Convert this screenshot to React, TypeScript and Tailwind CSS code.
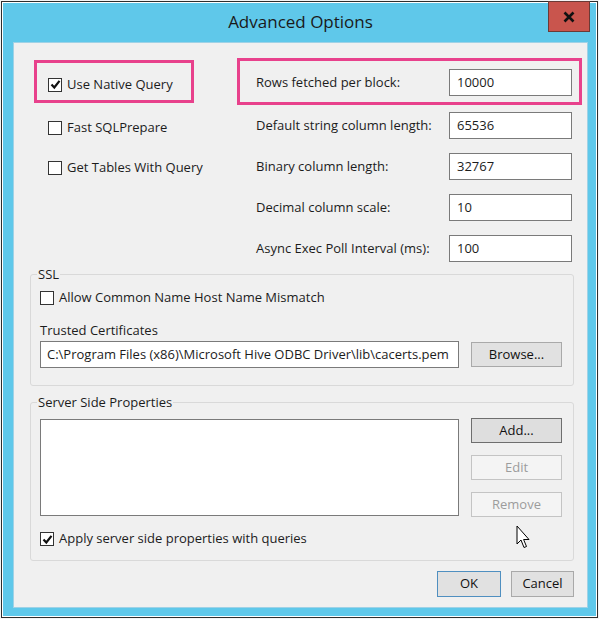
import React from "react";

function Check({ checked = false }: { checked?: boolean }) {
  return (
    <span className="flex h-[14px] w-[14px] shrink-0 items-center justify-center border border-[#333] bg-white">
      {checked && (
        <svg width="11" height="11" viewBox="0 0 11 11">
          <path d="M1.5 5.5 L4.3 8.5 L9.5 1.8" fill="none" stroke="#111" strokeWidth="2.2" />
        </svg>
      )}
    </span>
  );
}

function CheckRow({ label, checked }: { label: string; checked?: boolean }) {
  return (
    <label className="flex h-[20px] items-center gap-[5px] whitespace-nowrap">
      <Check checked={checked} />
      <span>{label}</span>
    </label>
  );
}

function Field({ label, value }: { label: string; value: string }) {
  return (
    <div className="flex h-[27px] items-center">
      <span className="w-[193px] whitespace-nowrap">{label}</span>
      <div className="flex h-[27px] w-[123px] items-center border border-[#7a7a7a] bg-white pl-[7px]">
        {value}
      </div>
    </div>
  );
}

function Btn({
  children,
  kind = "normal",
  size = "h-[25px] w-[91px]",
}: {
  children: React.ReactNode;
  kind?: "normal" | "default" | "disabled" | "ok";
  size?: string;
}) {
  const look =
    kind === "default"
      ? "border-[#6e6e6e] bg-[#dedede] text-[#111]"
      : kind === "disabled"
      ? "border-[#c4c4c4] bg-[#f4f4f4] text-[#9c9c9c]"
      : kind === "ok"
      ? "border-[#4f8fc0] bg-[#e1e1e1] text-[#111]"
      : "border-[#a9a9a9] bg-[#e1e1e1] text-[#111]";
  return (
    <button className={`flex items-center justify-center border ${size} ${look}`}>
      {children}
    </button>
  );
}

export default function App() {
  return (
    <div className="h-[619px] w-[599px] bg-[#f4f4f4] p-[1px] font-['Open_Sans',sans-serif] text-[13px] text-[#1c1c1c]">
      <div className="h-full border border-[#2e2e2e]">
        <div className="relative flex h-full flex-col border border-white bg-[#5fc8ea] pb-[8px] pl-[10px] pr-[8px]">
          {/* title bar */}
          <div className="flex h-[39px] items-center justify-center pb-[1px] text-[17px] text-[#1a1a1a]">
            Advanced Options
          </div>
          <button className="absolute right-[6px] top-[-2px] flex h-[31px] w-[42px] items-center justify-center border border-[#6b3a36] bg-[#c9554d]">
            <svg width="12" height="12" viewBox="0 0 12 12">
              <path d="M1.5 1.5 L10.5 10.5 M10.5 1.5 L1.5 10.5" stroke="#111" strokeWidth="2.6" />
            </svg>
          </button>

          {/* content */}
          <div className="flex flex-1 flex-col border border-[#9fd2e6] bg-[#f0f0f0] pb-[10px]">
            <div className="flex pl-[20px] pt-[15px]">
              <div className="flex w-[160px] flex-col">
                <div className="mt-[2px] flex h-[43px] items-center border-[3px] border-[#e8418c] pl-[11px] pt-[6px]">
                  <CheckRow label="Use Native Query" checked />
                </div>
                <div className="mt-[15px] flex flex-col gap-[20px] pl-[14px]">
                  <CheckRow label="Fast SQLPrepare" />
                  <CheckRow label="Get Tables With Query" />
                </div>
              </div>
              <div className="ml-[43px] flex w-[345px] flex-col gap-[14px]">
                <div className="-mb-[7px] flex h-[47px] border-[3px] border-[#e8418c] pl-[16px] pt-[8px]">
                  <Field label="Rows fetched per block:" value="10000" />
                </div>
                <div className="flex flex-col gap-[14px] pl-[19px]">
                  <Field label="Default string column length:" value="65536" />
                  <Field label="Binary column length:" value="32767" />
                  <Field label="Decimal column scale:" value="10" />
                  <Field label="Async Exec Poll Interval (ms):" value="100" />
                </div>
              </div>
            </div>

            {/* SSL */}
            <fieldset className="ml-[16px] mr-[13px] mt-[4px] rounded-[3px] border border-[#d9d9d9] pb-[17px] pl-[9px] pr-[10px]">
              <legend className="-ml-[3px] h-[16px] px-[1px] leading-[16px]">SSL</legend>
              <div className="pt-[6px]">
                <CheckRow label="Allow Common Name Host Name Mismatch" />
              </div>
              <div className="mt-[14px] h-[16px] leading-[16px]">Trusted Certificates</div>
              <div className="mt-[3px] flex items-center gap-[12px]">
                <div className="flex h-[27px] w-[419px] items-center whitespace-nowrap border border-[#7a7a7a] bg-white pl-[6px]">
                  C:\Program Files (x86)\Microsoft Hive ODBC Driver\lib\cacerts.pem
                </div>
                <Btn>Browse...</Btn>
              </div>
            </fieldset>

            {/* Server side properties */}
            <fieldset className="relative ml-[16px] mr-[13px] mt-[8px] rounded-[3px] border border-[#d9d9d9] pb-[11px] pl-[9px] pr-[10px]">
              <legend className="-ml-[3px] h-[16px] px-[1px] leading-[16px]">Server Side Properties</legend>
              <div className="flex gap-[12px] pt-[9px]">
                <div className="h-[97px] w-[419px] border border-[#7a7a7a] bg-white" />
                <div className="-mt-[1px] flex flex-col gap-[12px]">
                  <Btn kind="default">Add...</Btn>
                  <Btn kind="disabled">Edit</Btn>
                  <Btn kind="disabled">Remove</Btn>
                </div>
              </div>
              <div className="mt-[12px]">
                <CheckRow label="Apply server side properties with queries" checked />
              </div>
              <svg
                className="absolute left-[485px] top-[115px]"
                width="14"
                height="26"
                viewBox="0 0 14 26"
              >
                <path
                  d="M1 1 L1 19 L5 15 L8 22.5 L10.5 21.5 L7.6 14.5 L13 14.5 Z"
                  fill="#fff"
                  stroke="#000"
                  strokeWidth="1"
                  strokeLinejoin="round"
                />
              </svg>
            </fieldset>

            <div className="mt-[10px] flex justify-end gap-[10px] pr-[13px]">
              <Btn kind="ok" size="h-[26px] w-[64px]">OK</Btn>
              <Btn size="h-[26px] w-[63px]">Cancel</Btn>
            </div>
          </div>
        </div>
      </div>
    </div>
  );
}
